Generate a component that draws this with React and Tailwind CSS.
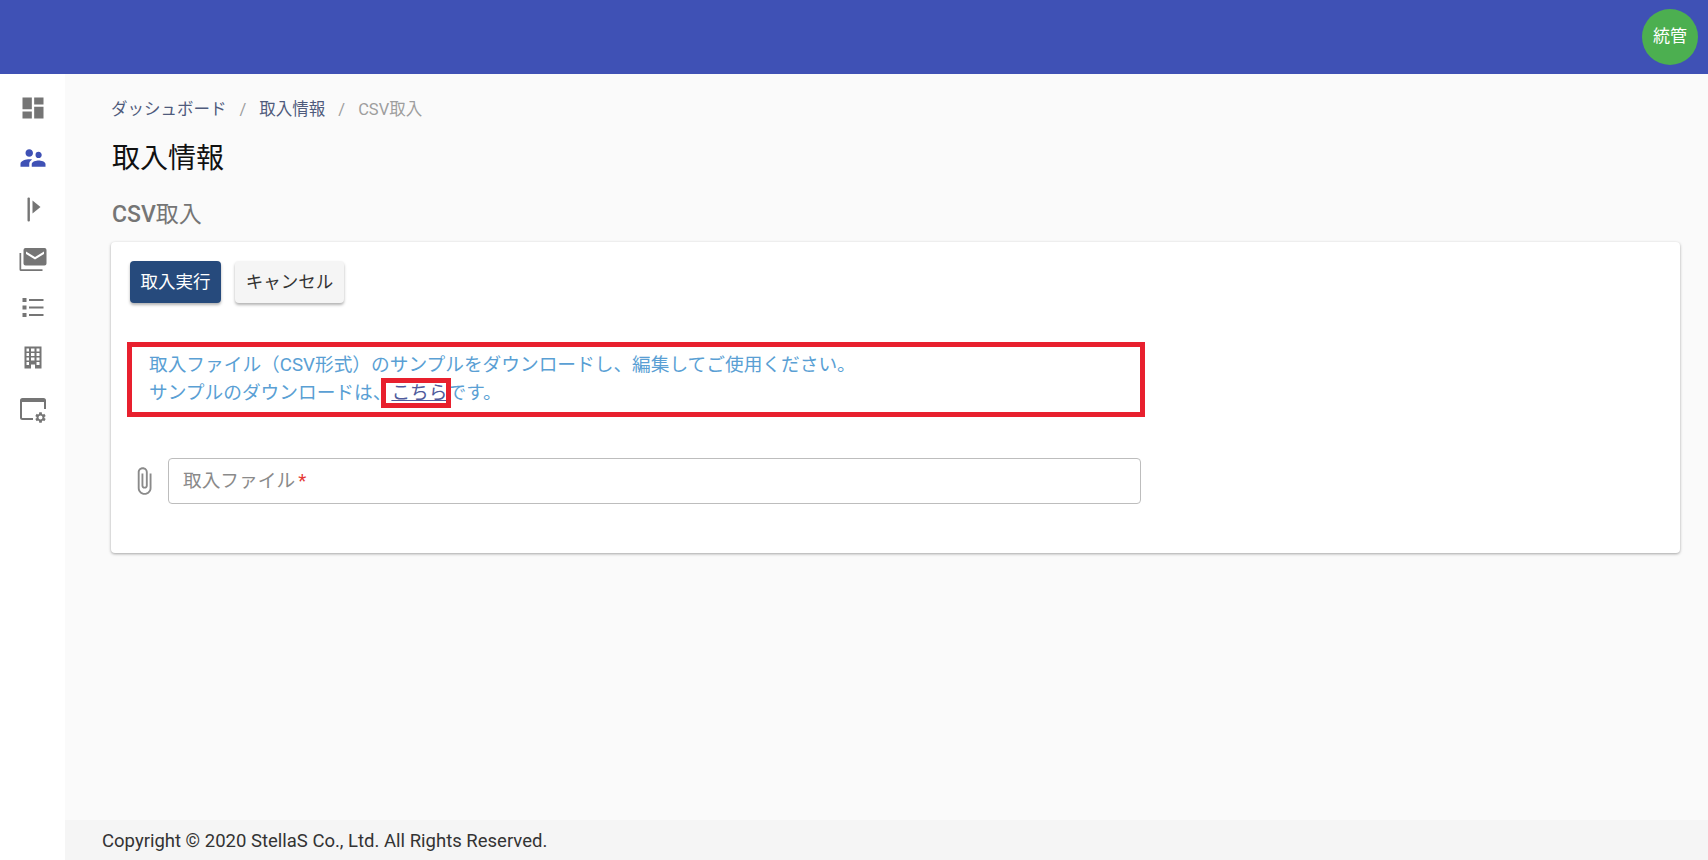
import { MdDashboard, MdSupervisorAccount, MdAttachFile } from "react-icons/md";

const FONT = "font-['Roboto','Noto_Sans_CJK_JP',sans-serif]";

const FlagIcon = () => (
  <svg width="28" height="28" viewBox="0 0 28 28" fill="#757575">
    <rect x="8.500" y="2.400" width="2.400" height="24" rx="1" />
    <path d="M13.500 5.400l8 6.500-8 6.500z" />
  </svg>
);

const MailStackIcon = () => (
  <svg width="30" height="28" viewBox="0 0 30 28" fill="#757575">
    <path d="M1.500 8h1.700v16.300H24.500V26H3a1.500 1.500 0 0 1-1.500-1.500z" />
    <path
      fillRule="evenodd"
      d="M7.500 3h19a2 2 0 0 1 2 2v13.500a2 2 0 0 1-2 2h-19a2 2 0 0 1-2-2V5a2 2 0 0 1 2-2zm.5 3.500v2.500l9 5.500L26 9V6.500l-9 5.500z"
    />
  </svg>
);

const ListIcon = () => (
  <svg width="28" height="28" viewBox="0 0 28 28" fill="#757575">
    <rect x="3.500" y="3" width="4" height="4" />
    <rect x="3.500" y="10.500" width="4" height="4" />
    <rect x="3.500" y="18" width="4" height="4" />
    <rect x="10" y="4" width="14.500" height="2" />
    <rect x="10" y="11.500" width="14.500" height="2" />
    <rect x="10" y="19" width="14.500" height="2" />
  </svg>
);

const BuildingIcon = () => (
  <svg width="24" height="26" viewBox="0 0 24 26" fill="#757575">
    <path
      fillRule="evenodd"
      d="M3.500.5h17v22h-6.500v-4h-4v4H3.500zM5.500 2.500v3h2.500v-3zm4.500 0v3h3.500v-3zm5.500 0v3h3v-3zM5.500 7v3h2.500V7zM10 7v3h3.500V7zm5.500 0v3h3V7zM5.500 11.500v3h2.500v-3zm4.500 0v3h3.500v-3zm5.500 0v3h3v-3zM5.500 16v3h2.500v-3zm10 0v3h3v-3z"
    />
  </svg>
);

const WindowGearIcon = () => (
  <svg width="28" height="28" viewBox="0 0 28 28">
    <path
      d="M14 23H3.500A1.500 1.500 0 0 1 2 21.500V4.500A1.500 1.500 0 0 1 3.500 3h21A1.500 1.500 0 0 1 26 4.500V13"
      fill="none"
      stroke="#757575"
      strokeWidth="2"
    />
    <rect x="2" y="3" width="24" height="3" fill="#757575" />
    <svg x="15" y="15" width="13" height="13" viewBox="0 0 24 24" fill="#757575">
      <path d="M19.140 12.940c.04-.3.06-.61.06-.94 0-.32-.02-.64-.07-.94l2.030-1.580c.18-.14.23-.41.12-.61l-1.920-3.320c-.12-.22-.37-.29-.59-.22l-2.390.96c-.5-.38-1.030-.7-1.620-.94l-.36-2.540c-.04-.24-.24-.41-.48-.41h-3.840c-.24 0-.43.17-.47.41l-.36 2.540c-.59.24-1.130.57-1.620.94l-2.390-.96c-.22-.08-.47 0-.59.22L2.740 8.870c-.12.21-.08.47.12.61l2.030 1.580c-.05.3-.09.63-.09.94s.02.64.07.94l-2.030 1.580c-.18.14-.23.41-.12.61l1.920 3.320c.12.22.37.29.59.22l2.390-.96c.5.38 1.030.7 1.620.94l.36 2.540c.05.24.24.41.48.41h3.840c.24 0 .44-.17.47-.41l.36-2.540c.59-.24 1.130-.56 1.620-.94l2.390.96c.22.08.47 0 .59-.22l1.920-3.320c.12-.22.07-.47-.12-.61l-2.010-1.580zM12 15.600c-1.980 0-3.600-1.620-3.600-3.600s1.620-3.600 3.600-3.600 3.600 1.620 3.600 3.600-1.620 3.600-3.600 3.600z" />
    </svg>
  </svg>
);

const navItems = [
  { icon: <MdDashboard size={28} color="#757575" /> },
  { icon: <MdSupervisorAccount size={30} color="#3f51b5" /> },
  { icon: <FlagIcon /> },
  { icon: <MailStackIcon /> },
  { icon: <ListIcon /> },
  { icon: <BuildingIcon /> },
  { icon: <WindowGearIcon /> },
];

const App = () => {
  return (
    <div className={`${FONT} flex h-screen flex-col overflow-hidden bg-white`}>
      <header className="flex h-[74px] shrink-0 items-center justify-end bg-[#3f51b5] pr-[10px]">
        <div className="flex h-[56px] w-[56px] items-center justify-center rounded-full bg-[#4caf50] text-[17px] text-white">
          統管
        </div>
      </header>

      <div className="flex min-h-0 flex-1">
        <nav className="flex w-[65px] shrink-0 flex-col items-center gap-[22.300px] bg-white pt-[20px]">
          {navItems.map((item, i) => (
            <div key={i} className="flex h-[28px] w-[32px] items-center justify-center">
              {item.icon}
            </div>
          ))}
        </nav>

        <div className="flex min-w-0 flex-1 flex-col bg-[#fafafa]">
          <main className="flex-1 pl-[46px] pr-[28px] pt-[25px]">
            <div className="flex h-[22px] items-center text-[16.500px] text-[#4f5b7c]">
              <span>ダッシュボード</span>
              <span className="mx-[13px] text-[#9e9e9e]">/</span>
              <span>取入情報</span>
              <span className="mx-[13px] text-[#9e9e9e]">/</span>
              <span className="text-[#9e9e9e]">CSV取入</span>
            </div>

            <h1 className="mt-[21px] pl-[1px] text-[28px] leading-[34px] text-[#111]">取入情報</h1>

            <h2 className="mt-[25px] pl-[1px] text-[23px] leading-[28px] text-[#757575]">
              <span className="font-medium">CSV</span>取入
            </h2>

            <section className="mt-[13px] h-[311px] rounded-[4px] bg-white pl-[19px] pt-[19px] shadow-[0_1px_3px_rgba(0,0,0,0.35)]">
              <div className="flex gap-[14px]">
                <button className="h-[42px] w-[91px] rounded-[4px] bg-[#264a7c] text-[17.500px] text-white shadow-[0_2px_3px_rgba(0,0,0,0.3)]">
                  取入実行
                </button>
                <button className="h-[42px] w-[109px] rounded-[4px] bg-[#f5f5f5] text-[17.500px] text-[#333] shadow-[0_2px_3px_rgba(0,0,0,0.3)]">
                  キャンセル
                </button>
              </div>

              <div className="ml-[-3px] mt-[39px] h-[75px] w-[1018px] border-[5px] border-[#e8202e] pl-[17px] pt-[4px] text-[18.700px] leading-[28px] text-[#5a9fd4]">
                <p>取入ファイル（CSV形式）のサンプルをダウンロードし、編集してご使用ください。</p>
                <p>
                  サンプルのダウンロードは、
                  <span className="relative">
                    <a className="text-[#4f5b9c] underline">こちら</a>
                    <span className="absolute -bottom-[4px] -left-[10px] -right-[4px] -top-[4px] border-[5px] border-[#e8202e]" />
                  </span>
                  です。
                </p>
              </div>

              <div className="mt-[41px] flex items-center">
                <MdAttachFile size={30} color="#8a8a8a" className="ml-[-1px] mr-[9px]" />
                <div className="flex h-[46px] w-[973px] items-center rounded-[4px] border border-[#bdbdbd] pl-[14px] text-[18.700px] text-[#8a8a8a]">
                  取入ファイル<span className="ml-[3px] text-[#e53935]">*</span>
                </div>
              </div>
            </section>
          </main>

          <footer className="flex h-[40px] shrink-0 items-center bg-[#f5f5f5] pl-[37px] pt-[3px] text-[18.500px] text-[#333]">
            Copyright © 2020 StellaS Co., Ltd. All Rights Reserved.
          </footer>
        </div>
      </div>
    </div>
  );
};

export default App;
